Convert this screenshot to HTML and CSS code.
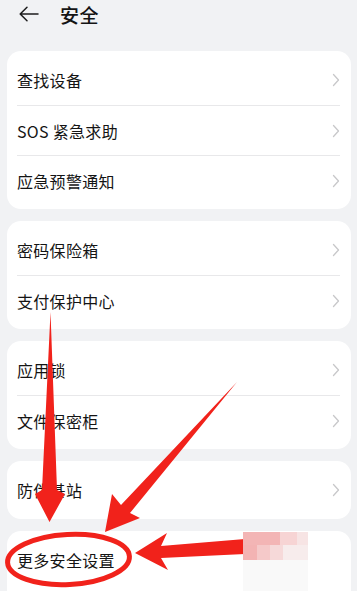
FILE: index.html
```html
<!DOCTYPE html>
<html lang="zh-CN">
<head>
    <meta charset="UTF-8">
    <meta name="viewport" content="width=device-width, initial-scale=1.0">
    <title>安全</title>
    <link rel="stylesheet" href="styles.css">
</head>
<body>
    <div class="page">
        <div class="top-bar">
            <svg class="back" width="20" height="16" viewBox="0 0 20 16">
                <path d="M19 8H1.5M8 1.2L1.2 8L8 14.8" fill="none" stroke="#1c1c1c" stroke-width="1.5" stroke-linecap="round" stroke-linejoin="round"/>
            </svg>
            <h1 class="title">安全</h1>
        </div>

        <div class="groups">
            <div class="group">
                <div class="row"><span>查找设备</span><svg class="chevron" viewBox="0 0 8 14"><polyline points="1.5,1.5 6.5,7 1.5,12.5"/></svg></div>
                <div class="row"><span>SOS 紧急求助</span><svg class="chevron" viewBox="0 0 8 14"><polyline points="1.5,1.5 6.5,7 1.5,12.5"/></svg></div>
                <div class="row"><span>应急预警通知</span><svg class="chevron" viewBox="0 0 8 14"><polyline points="1.5,1.5 6.5,7 1.5,12.5"/></svg></div>
            </div>

            <div class="group">
                <div class="row"><span>密码保险箱</span><svg class="chevron" viewBox="0 0 8 14"><polyline points="1.5,1.5 6.5,7 1.5,12.5"/></svg></div>
                <div class="row"><span>支付保护中心</span><svg class="chevron" viewBox="0 0 8 14"><polyline points="1.5,1.5 6.5,7 1.5,12.5"/></svg></div>
            </div>

            <div class="group">
                <div class="row"><span>应用锁</span><svg class="chevron" viewBox="0 0 8 14"><polyline points="1.5,1.5 6.5,7 1.5,12.5"/></svg></div>
                <div class="row"><span>文件保密柜</span><svg class="chevron" viewBox="0 0 8 14"><polyline points="1.5,1.5 6.5,7 1.5,12.5"/></svg></div>
            </div>

            <div class="group">
                <div class="row"><span>防伪基站</span><svg class="chevron" viewBox="0 0 8 14"><polyline points="1.5,1.5 6.5,7 1.5,12.5"/></svg></div>
            </div>

            <div class="group last">
                <div class="row"><span>更多安全设置</span></div>
            </div>
        </div>

        <!-- 标注：红色箭头和圈 -->
        <svg class="marks" width="357" height="591" viewBox="0 0 357 591">
            <g fill="#f1221b">
                <polygon points="50.5,312 57,490 65,494 49.5,522 35,494 42,490"/>
                <polygon points="237,382 130,513 140,518 105,532 112,494 121,505"/>
                <polygon points="135,553 167,533 161,546 245,539 245,554 161,558 168,570"/>
            </g>
            <ellipse cx="68.5" cy="559.5" rx="61" ry="25" fill="none" stroke="#f1221b" stroke-width="5" transform="rotate(-3 68.5 559.5)"/>
            <g>
                <rect x="243" y="532" width="37" height="13" fill="#f3b5b5"/>
                <rect x="280" y="532" width="17" height="13" fill="#f7d4d4"/>
                <rect x="297" y="532" width="11" height="13" fill="#f7e4e4"/>
                <rect x="243" y="545" width="14" height="15" fill="#f3b3b3"/>
                <rect x="257" y="545" width="13" height="15" fill="#f5c9c9"/>
                <rect x="270" y="545" width="13" height="15" fill="#f6d9d9"/>
                <rect x="283" y="545" width="25" height="15" fill="#f7ecec"/>
                <rect x="243" y="560" width="65" height="31" fill="#f9f9f9"/>
            </g>
        </svg>
    </div>
</body>
</html>
```

FILE: styles.css
```css
* {
    margin: 0;
    padding: 0;
    box-sizing: border-box;
}

body {
    background: #f1f2f4;
    font-family: 'Noto Sans CJK SC', 'Noto Sans', sans-serif;
    color: #141414;
    overflow: hidden;
}

.page {
    position: relative;
    width: 357px;
    height: 591px;
    overflow: hidden;
}

/* Top bar */
.top-bar {
    height: 28px;
    display: flex;
    align-items: center;
    gap: 21px;
    padding-left: 19px;
}

.title {
    font-size: 19px;
    font-weight: 500;
    letter-spacing: 0.5px;
}

/* Groups */
.groups {
    display: flex;
    flex-direction: column;
    gap: 12px;
    padding: 23px 6px 0 7px;
}

.group {
    background: #fff;
    border-radius: 14px;
    padding: 4px 11px 4px 10px;
}

.group.last {
    padding-bottom: 40px;
}

.row {
    height: 50px;
    display: flex;
    align-items: center;
    justify-content: space-between;
    font-size: 16px;
    letter-spacing: 0.3px;
}

.row + .row {
    border-top: 1px solid #e8e8ea;
}

.chevron {
    width: 8px;
    height: 14px;
    fill: none;
    stroke: #c8c8ca;
    stroke-width: 1.3;
    stroke-linecap: round;
    stroke-linejoin: round;
}

/* Annotations */
.marks {
    position: absolute;
    top: 0;
    left: 0;
    pointer-events: none;
}
```
